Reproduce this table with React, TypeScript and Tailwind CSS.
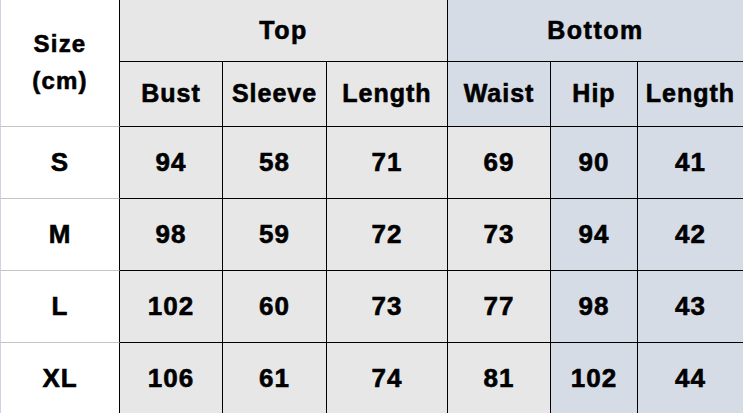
const GRAY = "bg-[#e7e7e7]";
const BLUE = "bg-[#d6dce5]";

const ROWS: { size: string; values: string[] }[] = [
  { size: "S", values: ["94", "58", "71", "69", "90", "41"] },
  { size: "M", values: ["98", "59", "72", "73", "94", "42"] },
  { size: "L", values: ["102", "60", "73", "77", "98", "43"] },
  { size: "XL", values: ["106", "61", "74", "81", "102", "44"] },
];

// body colours per data column: Bust, Sleeve, Length, Waist, Hip, Length
const BODY_BG = [GRAY, GRAY, GRAY, GRAY, BLUE, BLUE];
// right border per data column (last one has none)
const BODY_BR = [
  "border-r border-black",
  "border-r border-black",
  "border-r border-black",
  "border-r border-black",
  "border-r border-black",
  "",
];

const SUB_HEADERS = [
  { label: "Bust", bg: GRAY },
  { label: "Sleeve", bg: GRAY },
  { label: "Length", bg: GRAY },
  { label: "Waist", bg: BLUE },
  { label: "Hip", bg: BLUE },
  { label: "Length", bg: BLUE },
];

const ROW_H = ["h-[72px]", "h-[72px]", "h-[72px]", "h-[70px]"];

export default function App() {
  return (
    <div className="w-[743px] h-[413px] overflow-hidden bg-white text-black font-['Liberation_Sans',Arial,sans-serif] font-bold [-webkit-text-stroke:0.6px_black]">
      <div className="grid grid-cols-[120px_103px_104px_121px_103px_87px_105px] grid-rows-[62px_65px_72px_72px_72px_70px]">
        {/* Size header spans two rows */}
        <div className="row-span-2 flex flex-col items-center justify-center border-r border-b border-r-black border-b-[#c4c4c4] border-l border-l-[#cdd2e6] bg-white text-[24px] leading-[37px] tracking-[1.2px] pb-[2px]">
          <span>Size</span>
          <span>(cm)</span>
        </div>
        <div className={`col-span-3 flex items-center justify-center border-r border-b border-black ${GRAY} text-[25px] tracking-[1.5px]`}>
          Top
        </div>
        <div className={`col-span-3 flex items-center justify-center border-b border-black ${BLUE} text-[25px] tracking-[1.5px]`}>
          Bottom
        </div>

        {SUB_HEADERS.map((h, i) => (
          <div
            key={`h${i}`}
            className={`flex items-center justify-center border-b border-black ${BODY_BR[i]} ${h.bg} text-[25px] tracking-[1px]`}
          >
            {h.label}
          </div>
        ))}

        {ROWS.map((row, r) => (
          <div key={row.size} className="contents">
            <div
              className={`${ROW_H[r]} flex items-center justify-center border-l border-l-[#cdd2e6] border-r border-r-black ${
                r < 3 ? "border-b border-b-[#c4c4c4]" : ""
              } bg-white text-[26px] tracking-[1px]`}
            >
              {row.size}
            </div>
            {row.values.map((v, i) => (
              <div
                key={i}
                className={`flex items-center justify-center ${BODY_BR[i]} ${
                  r < 3 ? "border-b border-b-black" : ""
                } ${BODY_BG[i]} text-[26px] tracking-[1px]`}
              >
                {v}
              </div>
            ))}
          </div>
        ))}
      </div>
    </div>
  );
}
